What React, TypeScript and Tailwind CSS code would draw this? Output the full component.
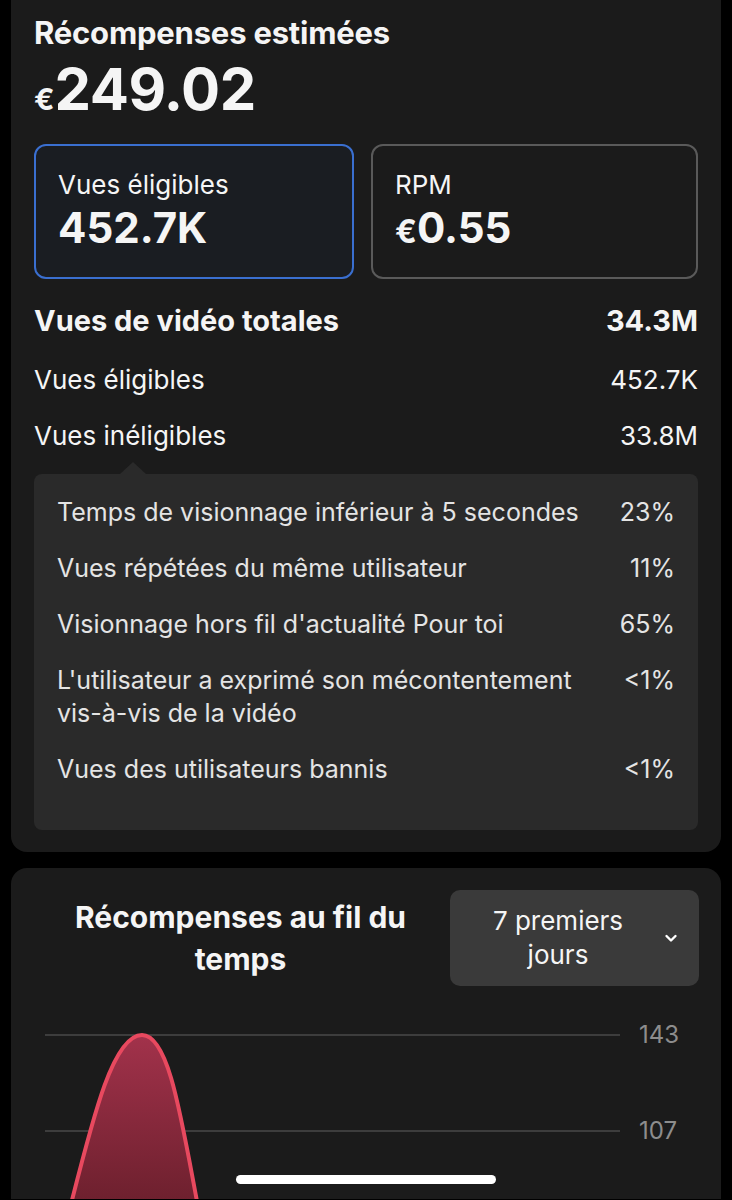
import React from 'react';

const breakdown = [
  { label: 'Temps de visionnage inférieur à 5 secondes', value: '23%' },
  { label: 'Vues répétées du même utilisateur', value: '11%' },
  { label: "Visionnage hors fil d'actualité Pour toi", value: '65%' },
  { label: "L'utilisateur a exprimé son mécontentement vis-à-vis de la vidéo", value: '<1%' },
  { label: 'Vues des utilisateurs bannis', value: '<1%' },
];

const Chevron = () => (
  <svg width="14" height="10" viewBox="0 0 14 10" fill="none">
    <path d="M2.5 3l4.5 4.5L11.5 3" stroke="#ffffff" strokeWidth="2.4" strokeLinecap="round" strokeLinejoin="round" />
  </svg>
);

const App: React.FC = () => {
  return (
    <div
      className="relative h-[1200px] w-[732px] overflow-hidden bg-black text-[#f5f5f5]"
      style={{ fontFamily: 'Inter, "Noto Sans", sans-serif' }}
    >
      {/* summary card */}
      <div className="mx-[11px] rounded-b-[16px] bg-[#1b1b1b] px-[23px] pb-[22px] pt-[14px]">
        <h1 className="text-[31px] font-bold leading-[38px] tracking-[-0.2px]">Récompenses estimées</h1>
        <div className="mt-[7px] flex items-baseline font-bold leading-[60px]">
          <span className="text-[30px]">€</span>
          <span className="text-[58px] tracking-[-0.5px]">249.02</span>
        </div>

        <div className="mt-[15px] flex gap-[17px]">
          <div className="h-[135px] w-[320px] rounded-[12px] border-2 border-[#3a6fd0] bg-[#1a1d22] px-[22px] pt-[23px]">
            <div className="text-[26px] leading-[32px]">Vues éligibles</div>
            <div className="mt-[2px] text-[42px] font-bold leading-[50px]">452.7K</div>
          </div>
          <div className="h-[135px] flex-1 rounded-[12px] border-2 border-[#5a5a5a] px-[22px] pt-[23px]">
            <div className="text-[26px] leading-[32px]">RPM</div>
            <div className="mt-[2px] flex items-baseline font-bold leading-[50px]">
              <span className="text-[32px]">€</span>
              <span className="text-[42px]">0.55</span>
            </div>
          </div>
        </div>

        <div className="mt-[26px] flex h-[32px] items-center justify-between text-[29px] font-bold">
          <span>Vues de vidéo totales</span>
          <span>34.3M</span>
        </div>
        <div className="mt-[26px] flex h-[32px] items-center justify-between text-[26px]">
          <span>Vues éligibles</span>
          <span>452.7K</span>
        </div>
        <div className="mt-[24px] flex h-[32px] items-center justify-between text-[26px]">
          <span>Vues inéligibles</span>
          <span>33.8M</span>
        </div>

        <div className="relative mt-[23px] rounded-[8px] bg-[#2a2a2a] px-[23px] pb-[44px] pt-[22px]">
          <div className="absolute left-[86px] top-[-12px] h-0 w-0 border-x-[13px] border-b-[12px] border-x-transparent border-b-[#2a2a2a]" />
          <div className="flex flex-col gap-[23px]">
            {breakdown.map((row) => (
              <div key={row.label} className="flex justify-between gap-[24px] text-[25px] leading-[33px] text-[#e4e4e4]">
                <span>{row.label}</span>
                <span className="shrink-0">{row.value}</span>
              </div>
            ))}
          </div>
        </div>
      </div>

      {/* chart card */}
      <div className="mx-[11px] mt-[16px] h-[331px] overflow-hidden rounded-t-[16px] bg-[#1b1b1b] px-[22px] pt-[22px]">
        <div className="flex items-center gap-[16px]">
          <h2 className="flex-1 pl-[14px] text-center text-[30px] font-bold leading-[42px]">
            Récompenses au fil du
            <br />
            temps
          </h2>
          <button className="flex h-[96px] w-[249px] items-center gap-[12px] rounded-[10px] bg-[#3a3a3a] pl-[14px] pr-[21px] text-[26px] leading-[34px] text-[#f5f5f5]">
            <span className="flex-1 text-center">
              7 premiers
              <br />
              jours
            </span>
            <Chevron />
          </button>
        </div>

        <div className="mt-[26px]">
          <svg width="709" height="190" viewBox="0 0 709 190" className="-ml-[22px] block">
            <defs>
              <linearGradient id="fill" x1="0" y1="0" x2="0" y2="1">
                <stop offset="0" stopColor="#a2324b" />
                <stop offset="1" stopColor="#6a1f2c" />
              </linearGradient>
            </defs>
            <line x1="34" y1="23" x2="609" y2="23" stroke="#4a4a4a" strokeWidth="1.5" />
            <line x1="34" y1="119" x2="609" y2="119" stroke="#4a4a4a" strokeWidth="1.5" />
            <text x="628" y="31" fill="#8d8d8d" fontSize="24">143</text>
            <text x="628" y="127" fill="#8d8d8d" fontSize="24">107</text>
            <path d="M58 200 C 82 105, 102 23, 131 23 C 158 23, 170 105, 188 200 Z" fill="url(#fill)" />
            <path d="M58 200 C 82 105, 102 23, 131 23 C 158 23, 170 105, 188 200" fill="none" stroke="#e8495f" strokeWidth="4" />
          </svg>
        </div>
      </div>

      {/* home indicator */}
      <div className="absolute left-[236px] top-[1175px] h-[9px] w-[260px] rounded-full bg-white" />
    </div>
  );
};

export default App;
